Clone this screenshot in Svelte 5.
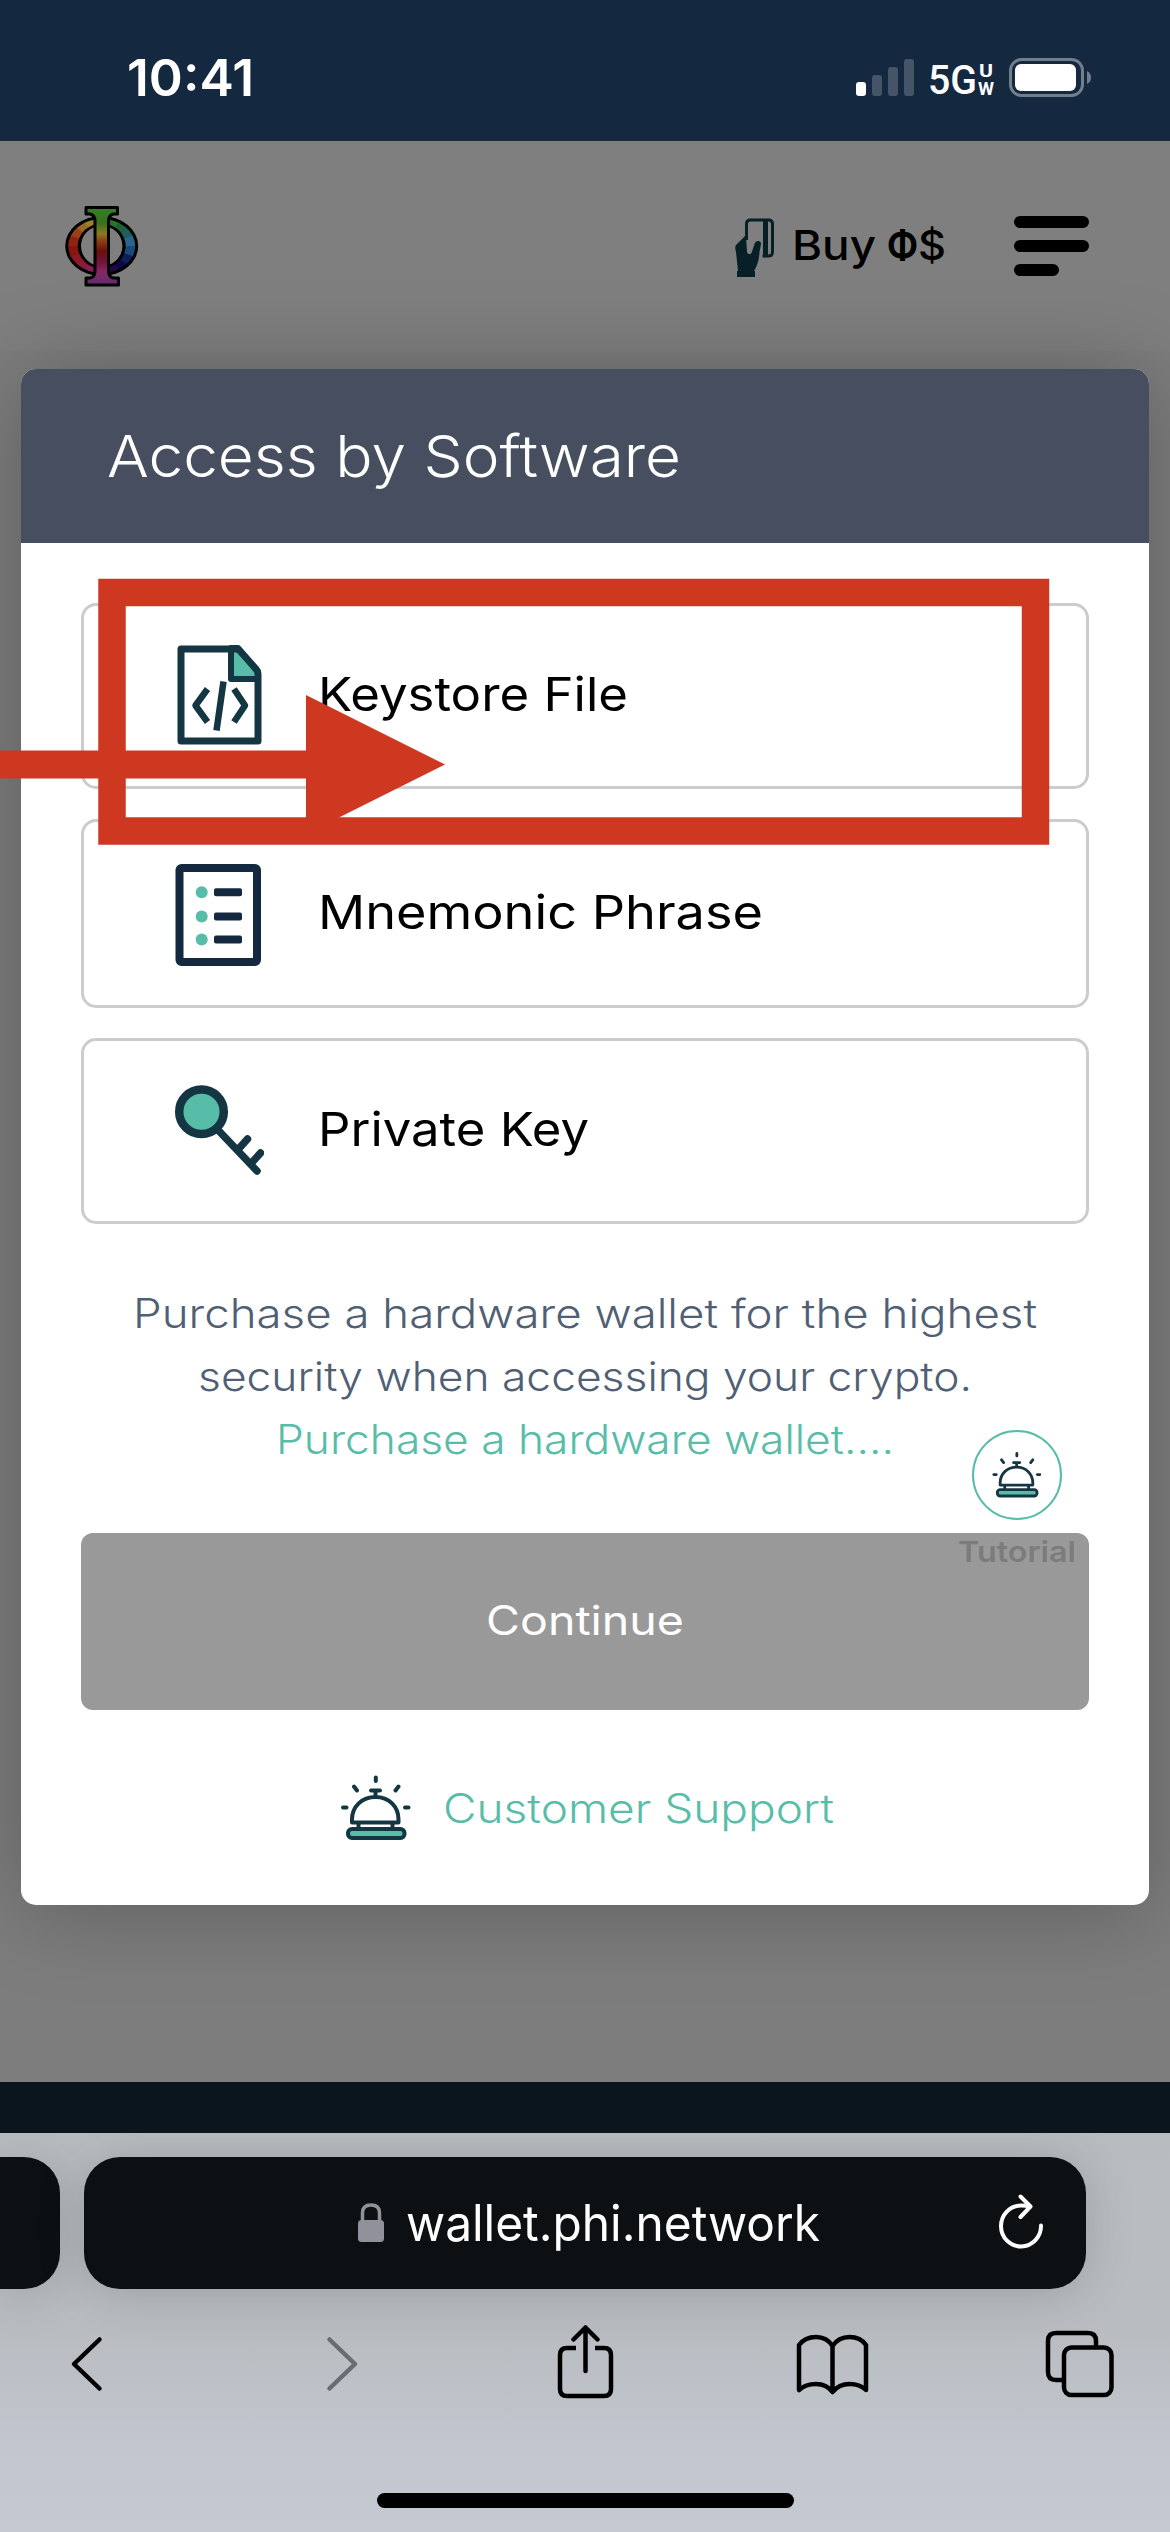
<script lang="ts">
  const signal = [
    { h: 14, on: true },
    { h: 21, on: false },
    { h: 29, on: false },
    { h: 37, on: false },
  ];

  const methods = [
    { id: 'keystore', label: 'Keystore File', width: 310 },
    { id: 'mnemonic', label: 'Mnemonic Phrase', width: 445 },
    { id: 'key', label: 'Private Key', width: 271 },
  ];

  // Colour wheel of the logo ring, clockwise from the top
  const hues = ['#2c6e1c', '#2a7425', '#1f6238', '#1d5f5c', '#2a6590', '#1a4a7c', '#0c1f5a', '#0d0747', '#22084a', '#4a1450', '#6d1c58', '#8a1f58', '#8c1a3c', '#8a1a22', '#861710', '#8f2210', '#98401a', '#9a6a20', '#94842a', '#5e7a20'];
  const wedges = hues.map((fill, i) => {
    const p = (k: number) => {
      const a = (k / hues.length) * Math.PI * 2 - Math.PI / 2;
      return `${101.7 + 60 * Math.cos(a)},${246 + 60 * Math.sin(a)}`;
    };
    return { fill, points: `101.7,246 ${p(i)} ${p(i + 1.05)}` };
  });
</script>

{#snippet fit(text: string, width: number, size: number)}
  <svg class="fit" {width} height={size}>
    <text x="0" y={size * 0.8} font-size={size} textLength={width} lengthAdjust="spacingAndGlyphs">{text}</text>
  </svg>
{/snippet}

{#snippet bell(width: number)}
  <svg {width} viewBox="339 1774 74 67" fill="none" stroke="#143642" stroke-width="4" stroke-linecap="round" stroke-linejoin="round">
    <path d="M375.8 1777.5v3.5M354 1786.5l3 4M398.500 1786.500l-3 4M343 1807.500h3.500M405 1807.500h3.500M371 1790.500h9M375.500 1791v4" />
    <path d="M352 1822.500v-3c0-13 10-22.500 23.500-22.500s23 9.500 23 22.500v3z" />
    <path d="M358.500 1824v4M392.500 1824v4" />
    <rect x="348" y="1829" width="56.500" height="9" rx="4" fill="#58bda8" />
  </svg>
{/snippet}

<div class="screen">
  <div class="status">
    <div class="time">{@render fit('10:41', 127, 50.5)}</div>
    <div class="signal">
      {#each signal as bar}
        <i class:on={bar.on} style="height:{bar.h}px"></i>
      {/each}
    </div>
    <div class="net">{@render fit('5G', 49, 41.5)}</div>
    <div class="uw">
      {@render fit('U', 14, 17.5)}
      {@render fit('W', 16, 17.5)}
    </div>
    <svg class="battery" width="84" height="40" viewBox="1008 58 84 40">
      <rect x="1010.500" y="59.500" width="72" height="36" rx="11" fill="none" stroke="#727e8b" stroke-width="3" />
      <rect x="1015" y="64" width="61" height="27" rx="6" fill="#fff" />
      <path d="M1087 71q4 2 4 6.500t-4 6.500z" fill="#727e8b" />
    </svg>
  </div>

  <div class="page">
    <header>
      <svg class="logo" width="76" height="84" viewBox="64 204 76 84">
        <defs>
          <linearGradient id="stem" x1="0" y1="0" x2="0" y2="1">
            <stop offset="0" stop-color="#357f28" />
            <stop offset=".2" stop-color="#38701e" />
            <stop offset=".34" stop-color="#8a7a22" />
            <stop offset=".44" stop-color="#8c3a14" />
            <stop offset=".56" stop-color="#6c100c" />
            <stop offset=".7" stop-color="#701238" />
            <stop offset=".82" stop-color="#842864" />
            <stop offset="1" stop-color="#642c70" />
          </linearGradient>
          <clipPath id="ring">
            <path clip-rule="evenodd" d="M68.200 246a33.500 27 0 1 0 67 0a33.500 27 0 1 0-67 0zM77.700 246a24 22.500 0 1 0 48 0a24 22.500 0 1 0-48 0z" />
          </clipPath>
        </defs>
        <path fill-rule="evenodd" d="M65.200 246a36.500 30 0 1 0 73 0a36.500 30 0 1 0-73 0zM81 246a20.700 20 0 1 0 41.400 0a20.700 20 0 1 0-41.400 0z" />
        <g clip-path="url(#ring)">
          {#each wedges as w}
            <polygon points={w.points} fill={w.fill} />
          {/each}
        </g>
        <path fill="url(#stem)" stroke="#000" stroke-width="3" stroke-linejoin="round" d="M86 207.500h31.500v6.500h-4q-5 1-5 7v50q0 6 5 7h5v7h-32.500v-7h4q5-1 5-7v-50q0-6-5-7h-4z" />
      </svg>
      <div class="buy">
        <svg width="42" height="60" viewBox="734 217 42 60">
          <path d="M746.500 240v-16q0-4 4-4h18q4 0 4 4v28q0 4-4 4h-6" fill="none" stroke="#071f26" stroke-width="3" />
          <path d="M763 220h5v36h-5z" fill="#071f26" />
          <path d="M745 236l-9 9q-1.500 2 0 7l2 19h-1v6h18v-6h-1q5-8 5.500-19l1.500-8q0-3-3-3q-2.500 0-3.500 3l-3 9q-3 3-4.500-1l-1-16z" fill="#071f26" />
        </svg>
        <div class="buy-label">
          {@render fit('Buy', 84, 41)}
          <b>{@render fit('Φ', 31, 40)}</b>
          {@render fit('$', 28, 41)}
        </div>
      </div>
      <div class="menu"><i></i><i></i><i></i></div>
    </header>

    <main>
      <section class="modal">
        <div class="modal-head">{@render fit('Access by Software', 574, 58)}</div>
        <div class="modal-body">
          {#each methods as m}
            <div class="card {m.id}">
              {#if m.id === 'keystore'}
                <svg width="90" height="106" viewBox="174 643 90 106" fill="none" stroke="#143642" stroke-width="7" stroke-linejoin="round">
                  <path d="M231 648v31h27v-7l-20-24z" fill="#58bda8" stroke-width="6" />
                  <path d="M181 649h55q2 0 4 2l16 18q2 2 2 5v67h-77z" />
                  <path d="M207.500 689l-12 16.500l12 16.500M234 689l11 16.500l-11 16.500M223.500 681.500l-7 49" stroke-width="6.500" />
                </svg>
              {:else if m.id === 'mnemonic'}
                <svg width="90" height="106" viewBox="174 860.500 90 106">
                  <rect x="179.500" y="867.500" width="77.500" height="94" rx="2" fill="none" stroke="#14283f" stroke-width="8" />
                  {#each [891.7, 916, 939] as y}
                    <circle cx="201.700" cy={y} r="6" fill="#58bda8" />
                    <rect x="214" y={y - 4} width="28" height="8" rx="2" fill="#14283f" />
                  {/each}
                </svg>
              {:else}
                <svg width="90" height="106" viewBox="174 1078 90 106" fill="none" stroke="#143642" stroke-linecap="round">
                  <path d="M218 1130l39 41M238.500 1149l9-10M251.500 1163l9-10" stroke-width="7.500" />
                  <circle cx="201.500" cy="1111.700" r="22.300" fill="#58bda8" stroke-width="8.500" />
                </svg>
              {/if}
              {@render fit(m.label, m.width, 46.5)}
            </div>
          {/each}

          <div class="promo">
            <div class="line">{@render fit('Purchase a hardware wallet for the highest', 904, 40.5)}</div>
            <div class="line">{@render fit('security when accessing your crypto.', 774, 40.5)}</div>
            <div class="line link">{@render fit('Purchase a hardware wallet....', 618, 40.5)}</div>
          </div>

          <div class="continue">{@render fit('Continue', 198, 40.5)}</div>
          <div class="support">
            {@render bell(74)}
            {@render fit('Customer Support', 391, 40.5)}
          </div>
        </div>
      </section>
    </main>
    <footer></footer>

    <div class="tutorial">
      <div class="bubble">{@render bell(52)}</div>
      {@render fit('Tutorial', 118, 29)}
    </div>
  </div>

  <div class="browser">
    <div class="tabs">
      <div class="tab prev"></div>
      <div class="tab url">
        <svg class="lock" width="28" height="42" viewBox="357 2202 28 42">
          <rect x="358" y="2220" width="26" height="22" rx="3.500" fill="#91919b" />
          <path d="M362.500 2221v-8q0-8 8.500-8t8.500 8v8" fill="none" stroke="#91919b" stroke-width="3.500" />
        </svg>
        {@render fit('wallet.phi.network', 414, 50)}
        <svg class="reload" width="48" height="58" viewBox="996 2192 48 58" fill="none" stroke="#fff" stroke-width="4" stroke-linecap="round" stroke-linejoin="round">
          <path d="M1029 2206.500q-4-1-9-1a20 20.500 0 1 0 20 20M1019.500 2196.500l10 10l-10 10.500" />
        </svg>
      </div>
    </div>
    <div class="tools">
      <svg width="34" height="76" viewBox="70 2325 34 76"><path d="M99.500 2339.500l-25.500 24.500l25.500 24.500" /></svg>
      <svg class="dim" width="34" height="76" viewBox="324 2325 34 76"><path d="M328.500 2339.500l25.500 24.500l-25.500 24.500" /></svg>
      <svg width="60" height="76" viewBox="555 2325 60 76"><path class="flat" d="M576 2348h-9q-7 0-7 7v34q0 7 7 7h37q7 0 7-7v-34q0-7-7-7h-9" /><path d="M585.500 2371v-43M573.500 2339.500l12-12l12 12" /></svg>
      <svg width="74" height="76" viewBox="795 2325 74 76"><path d="M799 2345q6-8 17-8t16.500 9q6-9 17-9t16.500 8v45q-6-6-16.500-6t-17 8q-6-8-16.500-8t-17 6zM832.500 2346v46" /></svg>
      <svg width="72" height="76" viewBox="1043 2325 72 76"><path class="flat" d="M1062 2380h-6q-8 0-8-8v-31q0-8 8-8h32q8 0 8 8v6" /><rect x="1064" y="2347.500" width="47.500" height="47.500" rx="7.500" /></svg>
    </div>
    <div class="home"></div>
  </div>

  <svg class="callout" width="1170" height="300" viewBox="0 570 1170 300">
    <path d="M112 592.500H1035.500V831H112Z" fill="none" stroke="#cf3820" stroke-width="27.500" />
    <path d="M0 750.500H306V695L445 764.500L306 834V778.500H0Z" fill="#cf3820" />
  </svg>
</div>

<style>
  :global(body) { margin: 0; }
  .screen {
    position: relative;
    width: 1170px;
    height: 2532px;
    overflow: hidden;
    display: flex;
    flex-direction: column;
    font-family: Inter, "Noto Sans", sans-serif;
    background: #7f7f7f;
  }
  svg { display: block; flex: none; }
  .fit { overflow: visible; fill: currentColor; }

  .status {
    height: 141px;
    flex: none;
    box-sizing: border-box;
    display: flex;
    align-items: flex-start;
    background: #14283f;
    color: #fff;
  }
  .time { margin: 56px 0 0 127px; width: 127px; font-weight: 600; }
  .signal { display: flex; align-items: flex-end; gap: 6px; margin: 59px 0 0 602px; height: 37px; }
  .signal i { width: 10px; border-radius: 3px; background: #455466; }
  .signal i.on { background: #fff; }
  .net { margin: 61px 0 0 14px; font-family: Roboto, sans-serif; font-weight: 500; }
  .uw { margin: 63px 0 0 1px; display: grid; justify-items: center; font-family: Roboto, sans-serif; font-weight: 700; width: 16px; }
  .battery { margin: 58px 0 0 14px; }

  .page {
    position: relative;
    height: 1992px;
    flex: none;
    overflow: hidden;
    display: flex;
    flex-direction: column;
  }
  header {
    height: 210px;
    flex: none;
    display: flex;
    align-items: flex-start;
    background: #7f7f7f;
  }
  .logo { margin: 63px 0 0 64px; }
  .buy { display: flex; gap: 16px; margin: 76px 0 0 594px; width: 212px; font-weight: 500; }
  .buy-label { display: flex; padding-top: 10px; }
  .buy-label b { margin: 0.500px 0 0 11px; font-weight: 700; }
  .menu { display: grid; gap: 12px; margin: 75px 0 0 68px; width: 75px; }
  .menu i { height: 12px; border-radius: 6px; background: #000; }
  .menu i:last-child { width: 45px; }
  main { flex: 1; background: #7d7d7d; padding: 18px 21px 0; }
  footer { height: 51px; flex: none; background: #0a151e; position: relative; }

  .modal {
    border-radius: 15px;
    background: #fff;
    height: 1536px;
    box-shadow: 0 4px 90px rgba(0, 0, 0, 0.25);
  }
  .modal-head {
    height: 174px;
    box-sizing: border-box;
    padding: 61.500px 0 0 86px;
    border-radius: 15px 15px 0 0;
    background: #464e5f;
    color: #fff;
    font-weight: 300;
  }
  .modal-body { padding: 60px 60px 0; }
  .card {
    height: 186px;
    box-sizing: border-box;
    border: 3px solid #ccc;
    border-radius: 15px;
    display: flex;
    align-items: center;
    gap: 54px;
    padding-left: 90px;
    margin-bottom: 30px;
    color: #000;
    font-weight: 400;
  }
  .card .fit { margin-top: 2px; }
  .mnemonic { height: 189px; }
  .card.mnemonic .fit { margin-top: 4px; }
  .promo { margin-top: 61px; color: #515f75; font-weight: 300; }
  .line { height: 63px; display: flex; align-items: center; justify-content: center; }
  .link { color: #58bda8; }
  .continue {
    height: 177px;
    box-sizing: border-box;
    padding-top: 3px;
    margin-top: 59px;
    border-radius: 12px;
    background: #999;
    color: #fff;
    font-weight: 400;
    display: flex;
    align-items: center;
    justify-content: center;
  }
  .support {
    display: flex;
    align-items: center;
    height: 67px;
    margin-top: 64px;
    padding-left: 258px;
    gap: 30px;
    color: #58bda8;
    font-weight: 300;
  }
  .support .fit { margin-top: 8px; }

  .tutorial {
    position: absolute;
    left: 957px;
    top: 1289px;
    width: 119px;
    display: flex;
    flex-direction: column;
    align-items: center;
    gap: 19px;
    color: #7c7c7c;
    font-weight: 600;
  }
  .bubble {
    width: 90px;
    height: 90px;
    box-sizing: border-box;
    border: 2.500px solid #58bda8;
    border-radius: 50%;
    background: #fff;
    display: flex;
    align-items: center;
    justify-content: center;
  }

  .browser {
    flex: 1;
    overflow: hidden;
    background: linear-gradient(#b9bcbf, #b9bdc1 50%, #c1c6cf 78%, #c5c9d1);
  }
  .tabs { display: flex; gap: 24px; padding-top: 24px; }
  .tab { height: 132px; background: #0d1013; box-shadow: 0 4px 50px rgba(0, 0, 0, 0.16); }
  .prev { width: 60px; border-radius: 0 36px 36px 0; }
  .url { width: 1002px; border-radius: 36px; display: flex; align-items: center; color: #fff; }
  .lock { margin-left: 273px; }
  .url .fit { margin-left: 21px; margin-top: 6px; }
  .reload { margin-left: 177px; margin-top: -4px; }
  .tools {
    display: flex;
    padding: 36px 0 0 70px;
    fill: none;
    stroke: #000;
    stroke-width: 4.500;
    stroke-linecap: round;
    stroke-linejoin: round;
  }
  .tools svg:nth-child(2) { margin-left: 221px; }
  .tools svg:nth-child(3) { margin-left: 196px; }
  .tools svg:nth-child(4) { margin-left: 180px; }
  .tools svg:nth-child(5) { margin-left: 174px; }
  .flat { stroke-linecap: butt; }
  .tools .dim { stroke: #6b6c6f; }
  .home { width: 417px; height: 15px; border-radius: 8px; background: #000; margin: 92px auto 0; }

  .callout { position: absolute; left: 0; top: 570px; }
</style>
